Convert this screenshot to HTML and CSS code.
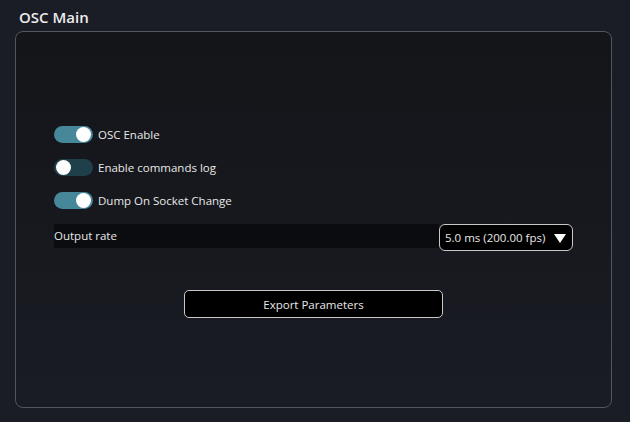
FILE: index.html
```html
<!DOCTYPE html>
<html lang="en">
<head>
<meta charset="utf-8">
<title>OSC Main</title>
<link rel="stylesheet" href="styles.css">
</head>
<body>
<h1 class="title">OSC Main</h1>
<section class="panel">
  <div class="toggles">
    <div class="toggle-row"><span class="switch on"><span class="knob"></span></span><span class="label">OSC Enable</span></div>
    <div class="toggle-row"><span class="switch"><span class="knob"></span></span><span class="label">Enable commands log</span></div>
    <div class="toggle-row"><span class="switch on"><span class="knob"></span></span><span class="label">Dump On Socket Change</span></div>
  </div>
  <div class="rate-row">
    <div class="rate-label">Output rate</div>
    <div class="select">
      <span>5.0 ms (200.00 fps)</span>
      <svg class="caret" width="12" height="10" viewBox="0 0 12 10"><path d="M0 1 H12 L6 10 Z" fill="#fff"/></svg>
    </div>
  </div>
  <div class="actions">
    <button class="btn">Export Parameters</button>
  </div>
</section>
</body>
</html>
```

FILE: styles.css
```css
html, body {
  margin: 0;
  padding: 0;
}
body {
  width: 630px;
  height: 422px;
  background: #1b1d26;
  font-family: "Open Sans", "Noto Sans", sans-serif;
  color: #e8e8e8;
  overflow: hidden;
}
.title {
  margin: 0;
  padding: 7px 0 0 19px;
  height: 24px;
  font-size: 15px;
  font-weight: 600;
  line-height: 20px;
  color: #ececec;
}
.panel {
  margin: 0 0 0 15px;
  border: 1.5px solid #54565d;
  border-radius: 8px;
  background: linear-gradient(#141519, #1a1c24);
  padding: 94px 38px 0 38px;
  box-sizing: content-box;
  width: 519px;
  height: 281px;
}
.toggles {
  display: flex;
  flex-direction: column;
  gap: 16px;
}
.toggle-row {
  display: flex;
  align-items: center;
  height: 17px;
  gap: 5px;
  font-size: 11.5px;
}
.switch {
  width: 39px;
  height: 17px;
  border-radius: 9px;
  background: #1f3f4a;
  display: flex;
  align-items: center;
  padding: 0 2px;
  box-sizing: border-box;
}
.switch.on {
  background: #46879a;
  justify-content: flex-end;
}
.knob {
  width: 15px;
  height: 15px;
  border-radius: 50%;
  background: #ffffff;
}
.rate-row {
  display: flex;
  align-items: flex-start;
  margin-top: 15px;
  width: 519px;
}
.rate-label {
  flex: 1;
  height: 24px;
  line-height: 24px;
  background: #0b0c10;
  font-size: 11.5px;
}
.select {
  width: 134px;
  height: 27px;
  box-sizing: border-box;
  border: 1.5px solid #c8c8c8;
  border-radius: 6px;
  background: #000;
  display: flex;
  align-items: center;
  justify-content: space-between;
  padding: 0 5px 0 5px;
  font-size: 11.5px;
}
.caret {
  margin-right: 1px;
}
.actions {
  display: flex;
  justify-content: center;
  margin-top: 39px;
}
.btn {
  width: 259px;
  height: 28px;
  background: #000;
  border: 1.5px solid #c8c8c8;
  border-radius: 5px;
  color: #e8e8e8;
  font-family: "Open Sans", "Noto Sans", sans-serif;
  font-size: 11.5px;
  padding: 0;
}
```
